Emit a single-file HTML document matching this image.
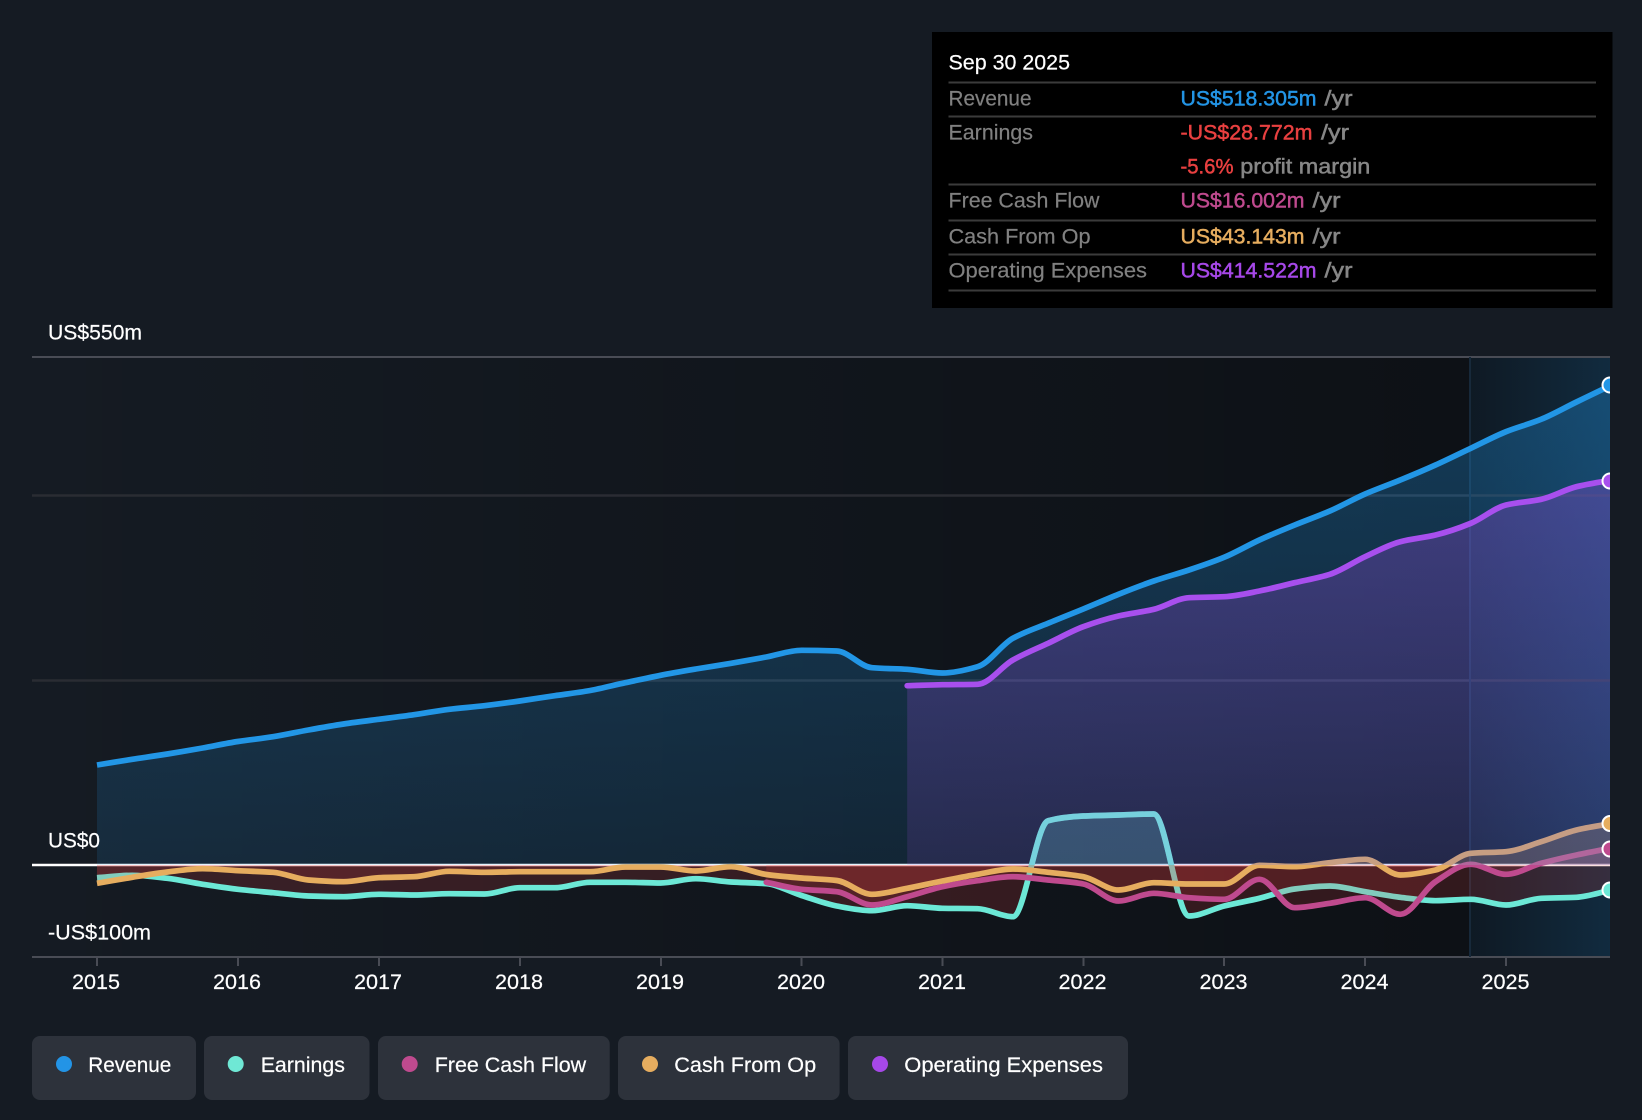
<!DOCTYPE html>
<html>
<head>
<meta charset="utf-8">
<style>
html,body{margin:0;padding:0;background:#151b23;width:1642px;height:1120px;overflow:hidden}
svg{display:block}
text{font-family:"Liberation Sans",sans-serif;font-size:21.5px;fill:#fff;stroke:#fff;stroke-width:.2px}
.l{fill:#808080;stroke:#808080}
.m{stroke-width:.5px}
.g{fill:#868686;stroke:#868686}
</style>
</head>
<body>
<svg xmlns="http://www.w3.org/2000/svg" width="1642" height="1120" viewBox="0 0 1642 1120">
<defs>
<linearGradient id="shade" gradientUnits="userSpaceOnUse" x1="32" y1="0" x2="1470" y2="0">
<stop offset="0" stop-color="#000" stop-opacity="0"/><stop offset="1" stop-color="#000" stop-opacity=".38"/>
</linearGradient>
<linearGradient id="fore" gradientUnits="userSpaceOnUse" x1="1470" y1="0" x2="1610" y2="0">
<stop offset="0" stop-color="#2296e6" stop-opacity=".07"/><stop offset="1" stop-color="#2296e6" stop-opacity=".2"/>
</linearGradient>
<linearGradient id="revF" gradientUnits="userSpaceOnUse" x1="0" y1="385" x2="0" y2="865">
<stop offset="0" stop-color="#2296e6" stop-opacity=".32"/><stop offset="1" stop-color="#2296e6" stop-opacity=".13"/>
</linearGradient>
<linearGradient id="opF" gradientUnits="userSpaceOnUse" x1="0" y1="480" x2="0" y2="865">
<stop offset="0" stop-color="#a84fee" stop-opacity=".3"/><stop offset="1" stop-color="#a84fee" stop-opacity=".13"/>
</linearGradient>
<clipPath id="plot"><rect x="32" y="340" width="1578" height="640"/></clipPath>
<clipPath id="above"><rect x="32" y="340" width="1578" height="525"/></clipPath>
<clipPath id="below"><rect x="32" y="865" width="1578" height="92"/></clipPath>
</defs>

<rect x="32" y="357" width="1438" height="600" fill="url(#shade)"/>
<rect x="1470" y="357" width="140" height="600" fill="#000" fill-opacity=".38"/>
<rect x="1470" y="357" width="140" height="600" fill="url(#fore)"/>

<g fill="none">
<path d="M32 357H1610" stroke="#494c55" stroke-width="2"/>
<path d="M32 495.5H1610" stroke="#2a2c33" stroke-width="2.5"/>
<path d="M32 680.5H1610" stroke="#2a2c33" stroke-width="2.5"/>
<path d="M32 957H1610" stroke="#494c55" stroke-width="2"/>
<path d="M97 958v8M238 958v8M379 958v8M520 958v8M661 958v8M801.500 958v8M942.500 958v8M1083.500 958v8M1224 958v8M1365 958v8M1506 958v8" stroke="#494c55" stroke-width="2"/>
<path d="M32 865H1610" stroke="#fff" stroke-width="2.4"/>
<path d="M1470 357V957" stroke="#17293a" stroke-width="2"/>
</g>

<g clip-path="url(#plot)">
<g id="lower"></g>
<g id="upper"></g>
</g>

<g clip-path="url(#plot)" stroke="#fff" stroke-width="2">
<circle cx="1610" cy="890" r="7.500" fill="#6ce8d6"/>
<circle cx="1610" cy="849" r="7.500" fill="#bf4a8e"/>
<circle cx="1610" cy="823.500" r="7.500" fill="#e6ad5f"/>
<circle cx="1610" cy="481" r="7.500" fill="#a84fee"/>
<circle cx="1610" cy="385" r="7.500" fill="#2296e6"/>
</g>

<text x="48" y="339.500" textLength="94" lengthAdjust="spacingAndGlyphs">US$550m</text>
<text x="48" y="847.500" textLength="52" lengthAdjust="spacingAndGlyphs">US$0</text>
<text x="48" y="939.500" textLength="103" lengthAdjust="spacingAndGlyphs">-US$100m</text>

<g text-anchor="start">
<text x="72" y="989" textLength="48" lengthAdjust="spacingAndGlyphs">2015</text>
<text x="213" y="989" textLength="48" lengthAdjust="spacingAndGlyphs">2016</text>
<text x="354" y="989" textLength="48" lengthAdjust="spacingAndGlyphs">2017</text>
<text x="495" y="989" textLength="48" lengthAdjust="spacingAndGlyphs">2018</text>
<text x="636" y="989" textLength="48" lengthAdjust="spacingAndGlyphs">2019</text>
<text x="777" y="989" textLength="48" lengthAdjust="spacingAndGlyphs">2020</text>
<text x="918" y="989" textLength="48" lengthAdjust="spacingAndGlyphs">2021</text>
<text x="1058.500" y="989" textLength="48" lengthAdjust="spacingAndGlyphs">2022</text>
<text x="1199.500" y="989" textLength="48" lengthAdjust="spacingAndGlyphs">2023</text>
<text x="1340.500" y="989" textLength="48" lengthAdjust="spacingAndGlyphs">2024</text>
<text x="1481.500" y="989" textLength="48" lengthAdjust="spacingAndGlyphs">2025</text>
</g>

<!-- tooltip panel -->
<rect x="932" y="32" width="680.500" height="276" fill="#000"/>
<path d="M948.500 82.500H1596M948.500 116.500H1596M948.500 184.500H1596M948.500 220.500H1596M948.500 254.500H1596M948.500 290.500H1596" stroke="#3b3b3b" stroke-width="2" fill="none"/>
<text x="948.500" y="69.500" textLength="121.500" lengthAdjust="spacingAndGlyphs">Sep 30 2025</text>
<text class="l" x="948.500" y="105.500" textLength="83" lengthAdjust="spacingAndGlyphs">Revenue</text>
<text class="l" x="948.500" y="139.500" textLength="84.500" lengthAdjust="spacingAndGlyphs">Earnings</text>
<text class="l" x="948.500" y="207.500" textLength="151" lengthAdjust="spacingAndGlyphs">Free Cash Flow</text>
<text class="l" x="948.500" y="243.500" textLength="142" lengthAdjust="spacingAndGlyphs">Cash From Op</text>
<text class="l" x="948.500" y="277.500" textLength="198.500" lengthAdjust="spacingAndGlyphs">Operating Expenses</text>

<text class="m" style="fill:#2394e5;stroke:#2394e5" x="1180.500" y="105.500" textLength="136" lengthAdjust="spacingAndGlyphs">US$518.305m</text>
<text class="m g" x="1324.500" y="105.500" textLength="28" lengthAdjust="spacingAndGlyphs">/yr</text>
<text class="m" style="fill:#e84040;stroke:#e84040" x="1180.500" y="139.500" textLength="132" lengthAdjust="spacingAndGlyphs">-US$28.772m</text>
<text class="m g" x="1321" y="139.500" textLength="28" lengthAdjust="spacingAndGlyphs">/yr</text>
<text class="m" style="fill:#e84040;stroke:#e84040" x="1180.500" y="173.500" textLength="53" lengthAdjust="spacingAndGlyphs">-5.6%</text>
<text class="m g" x="1240.300" y="173.500" textLength="130" lengthAdjust="spacingAndGlyphs">profit margin</text>
<text class="m" style="fill:#bf4a8e;stroke:#bf4a8e" x="1180.500" y="207.500" textLength="124" lengthAdjust="spacingAndGlyphs">US$16.002m</text>
<text class="m g" x="1312.500" y="207.500" textLength="28" lengthAdjust="spacingAndGlyphs">/yr</text>
<text class="m" style="fill:#e6ad5f;stroke:#e6ad5f" x="1180.500" y="243.500" textLength="124" lengthAdjust="spacingAndGlyphs">US$43.143m</text>
<text class="m g" x="1312.500" y="243.500" textLength="28" lengthAdjust="spacingAndGlyphs">/yr</text>
<text class="m" style="fill:#a648e8;stroke:#a648e8" x="1180.500" y="277.500" textLength="136" lengthAdjust="spacingAndGlyphs">US$414.522m</text>
<text class="m g" x="1324.500" y="277.500" textLength="28" lengthAdjust="spacingAndGlyphs">/yr</text>

<!-- legend -->
<g fill="#2d323b">
<rect x="32" y="1036" width="164" height="64" rx="8"/>
<rect x="204" y="1036" width="165.500" height="64" rx="8"/>
<rect x="378" y="1036" width="231.700" height="64" rx="8"/>
<rect x="618" y="1036" width="221.600" height="64" rx="8"/>
<rect x="848" y="1036" width="280" height="64" rx="8"/>
</g>
<circle cx="64" cy="1064" r="8" fill="#2394e6"/>
<circle cx="235.700" cy="1064" r="8" fill="#6fe8d5"/>
<circle cx="409.700" cy="1064" r="8" fill="#bf4a8e"/>
<circle cx="650" cy="1064" r="8" fill="#e6ad5f"/>
<circle cx="880" cy="1064" r="8" fill="#a648e8"/>
<text x="88.300" y="1072" textLength="83" lengthAdjust="spacingAndGlyphs">Revenue</text>
<text x="260.700" y="1072" textLength="84.300" lengthAdjust="spacingAndGlyphs">Earnings</text>
<text x="434.700" y="1072" textLength="151.500" lengthAdjust="spacingAndGlyphs">Free Cash Flow</text>
<text x="674.300" y="1072" textLength="141.800" lengthAdjust="spacingAndGlyphs">Cash From Op</text>
<text x="904.300" y="1072" textLength="198.600" lengthAdjust="spacingAndGlyphs">Operating Expenses</text>
</svg>
<script>
var NS="http://www.w3.org/2000/svg",X0=97,H=35.225,Z=865,W="5.7";
var S={
rev:{s:0,c:"#2296e6",y:[765,759.3,754,748,741.5,736.7,730,724,719.3,714.7,709.3,705.7,701,695.7,690.500,682.7,675.3,669,663.3,657,650.3,651,667.7,669.3,673,666.7,638.3,623.3,609,594.3,581,570,557.3,540,525,511,494,480,465,448.3,431.7,419.3,402,385]},
op:{s:23,c:"#a84fee",y:[685.7,684.7,684.3,660,643.3,626.7,616,609.3,597.7,596.7,591,582.7,574.3,556.7,541.7,535,523.3,505,499.3,486.7,480]},
earn:{s:0,c:"#6ce8d6",y:[877.7,875.3,878.3,884.3,889.3,892.7,896,896.7,894.3,895,893.7,894,887.7,887.7,882.3,882.3,883,878.7,882,883.7,895.5,906,910.7,905.7,908.3,908.7,916.7,820.7,816,815,814,916,906,898.3,889,886,891.7,897.3,900.7,899.3,905,898.3,897.3,890]},
fcf:{s:19,c:"#bf4a8e",y:[882.3,889.3,891.7,905,896.7,886.7,880.7,876.7,880,884,901,893.3,897.7,899.3,879.3,907.7,903.3,897.7,914.3,881.7,864.3,874.3,863.3,855,848]},
cfo:{s:0,c:"#e6ad5f",y:[883.3,877.3,872,868.7,870.7,872.3,880,881.7,877.7,876.7,871.3,872.3,871.7,871.7,871.7,867,867,871,866.7,874.5,878,880.5,894.3,888.3,881,874.3,869,872.3,876.7,890,882.7,884,884,865.3,866.7,862.7,859.3,875,870,853.3,851.7,841.7,830,823.500]}
};
function line(o){
 var y=o.y,n=y.length,d=[],m=[],i,x=function(k){return X0+H*(o.s+k)};
 for(i=0;i<n-1;i++)d[i]=(y[i+1]-y[i])/H;
 m[0]=d[0];m[n-1]=d[n-2];
 for(i=1;i<n-1;i++)m[i]=d[i-1]*d[i]<=0?0:2*d[i-1]*d[i]/(d[i-1]+d[i]);
 var p="M"+x(0).toFixed(1)+" "+y[0];
 for(i=0;i<n-1;i++){
  p+="C"+(x(i)+H/3).toFixed(1)+" "+(y[i]+m[i]*H/3).toFixed(1)+" "+(x(i)+2*H/3).toFixed(1)+" "+(y[i+1]-m[i+1]*H/3).toFixed(1)+" "+x(i+1).toFixed(1)+" "+y[i+1];
 }
 return {d:p,a:p+"L"+x(n-1).toFixed(1)+" "+Z+"L"+x(0).toFixed(1)+" "+Z+"Z"};
}
function add(g,d,a){var e=document.createElementNS(NS,"path");e.setAttribute("d",d);for(var k in a)e.setAttribute(k,a[k]);g.appendChild(e);}
var low=document.getElementById("lower"),up=document.getElementById("upper");
["earn","fcf","cfo"].forEach(function(k){
 var o=S[k],l=line(o);
 add(low,l.a,{fill:"#ef4444","fill-opacity":".17","clip-path":"url(#below)"});
 add(low,l.a,{fill:o.c,"fill-opacity":".25","clip-path":"url(#above)"});
 add(low,l.d,{fill:"none",stroke:o.c,"stroke-width":W,"stroke-linejoin":"round","stroke-linecap":k=="fcf"?"round":"butt"});
});
var r=line(S.rev),p=line(S.op),e=line(S.earn);
add(up,r.a,{fill:"url(#revF)"});
add(up,p.a,{fill:"url(#opF)"});
add(up,e.d,{fill:"none",stroke:"#7fd8de","stroke-opacity":".55","stroke-width":W,"clip-path":"url(#above)"});
add(up,r.d,{fill:"none",stroke:S.rev.c,"stroke-width":W,"stroke-linejoin":"round"});
add(up,p.d,{fill:"none",stroke:S.op.c,"stroke-width":W,"stroke-linejoin":"round","stroke-linecap":"round"});
</script>
</body>
</html>
